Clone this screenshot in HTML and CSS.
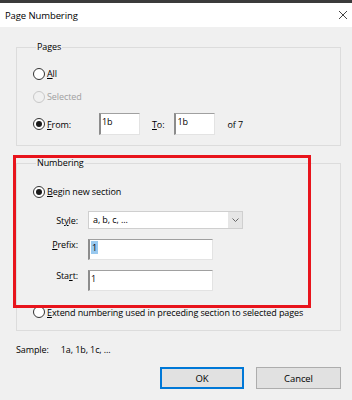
FILE: index.html
```html
<!DOCTYPE html>
<html lang="en">
<head>
    <meta charset="UTF-8">
    <title>Page Numbering</title>
    <link rel="stylesheet" href="styles.css">
</head>
<body>

<div class="dialog">
    <div class="topbar"></div>
    <div class="titlebar">
        <span class="title">Page Numbering</span>
        <svg class="close" width="10" height="10" viewBox="0 0 10 10">
            <path d="M1 1 L9 9 M9 1 L1 9" stroke="#444" stroke-width="1" fill="none"/>
        </svg>
    </div>

    <div class="content">
        <fieldset class="group pages">
            <legend>Pages</legend>
            <div class="row first">
                <span class="radio"></span><span><u>A</u>ll</span>
            </div>
            <div class="row disabled">
                <span class="radio"></span><span>Selected</span>
            </div>
            <div class="row range">
                <span class="radio checked"></span><span class="from-label"><u>F</u>rom:</span>
                <span class="field small">1b</span>
                <span class="to-label"><u>T</u>o:</span>
                <span class="field small">1b</span>
                <span class="total">of 7</span>
            </div>
        </fieldset>

        <fieldset class="group numbering">
            <legend>Numbering</legend>
            <div class="row first">
                <span class="radio checked"></span><span><u>B</u>egin new section</span>
            </div>
            <div class="form-row style-row">
                <span class="label">St<u>y</u>le:</span>
                <span class="select"><span class="select-text">a, b, c, ...</span><span class="select-arrow">
                    <svg width="7" height="4" viewBox="0 0 7 4"><path d="M0.5 0.5 L3.5 3.5 L6.5 0.5" stroke="#666" fill="none"/></svg>
                </span></span>
            </div>
            <div class="form-row">
                <span class="label"><u>P</u>refix:</span>
                <span class="field wide"><span class="selected">1</span></span>
            </div>
            <div class="form-row">
                <span class="label">Sta<u>r</u>t:</span>
                <span class="field wide">1</span>
            </div>
            <div class="row extend">
                <span class="radio"></span><span><u>E</u>xtend numbering used in preceding section to selected pages</span>
            </div>
        </fieldset>

        <div class="sample">
            <span>Sample:</span>
            <span class="sample-value">1a, 1b, 1c, ...</span>
        </div>

        <div class="buttons">
            <button class="btn default">OK</button>
            <button class="btn">Cancel</button>
        </div>

        <!-- annotation drawn over the dialog -->
        <div class="highlight"></div>
    </div>
</div>

</body>
</html>
```

FILE: styles.css
```css
body {
    margin: 0;
    background-color: #f0f0f0;
    font-family: "Open Sans", "Noto Sans", sans-serif;
    font-size: 9px;
    letter-spacing: -0.1px;
    color: #000;
}
u {
    text-decoration-thickness: 1px;
    text-underline-offset: 1px;
}
.dialog {
    width: 352px;
    height: 400px;
    background-color: #f0f0f0;
}
.topbar {
    height: 3px;
    background-color: #3b3b3b;
}
.titlebar {
    height: 24px;
    background-color: #fff;
    display: flex;
    align-items: center;
    justify-content: space-between;
    padding: 0 3px 0 5px;
}
.title {
    font-size: 9.5px;
}
.close {
    margin-right: 1px;
}

.content {
    position: relative;
    padding: 13px 11px 0 16px;
}
.group {
    margin: 0;
    border: 1px solid #dcdcdc;
    padding: 0 0 0 16px;
}
.group legend {
    padding: 0 1px;
    margin-left: 3px;
    line-height: 14px;
}
.pages {
    padding-top: 8px;
    padding-bottom: 10px;
}
.numbering {
    margin-top: 10px;
    padding-top: 10px;
    padding-bottom: 8px;
}

.row {
    display: flex;
    align-items: center;
    height: 23px;
}
.row.disabled {
    color: #a0a0a0;
}
.row.range {
    height: 22px;
    margin-top: 5px;
}
.radio {
    width: 10px;
    height: 10px;
    border: 1px solid #333;
    border-radius: 50%;
    background-color: #fff;
    margin-right: 2px;
    position: relative;
    flex-shrink: 0;
}
.row.disabled .radio {
    border-color: #c8c8c8;
    background-color: #f0f0f0;
}
.radio.checked::after {
    content: "";
    position: absolute;
    left: 2px;
    top: 2px;
    width: 6px;
    height: 6px;
    border-radius: 50%;
    background-color: #1a1a1a;
}
.from-label {
    width: 52px;
}
.field {
    box-sizing: border-box;
    height: 22px;
    background-color: #fff;
    border-top: 1px solid #a0a0a0;
    border-left: 2px solid #8c8c8c;
    border-right: 1px solid #e3e3e3;
    border-bottom: 1px solid #e3e3e3;
    padding: 1px 0 0 1px;
    line-height: 14px;
    align-self: flex-start;
}
.field.small {
    width: 41px;
}
.to-label {
    margin: 0 10px 0 12px;
}
.total {
    margin-left: 12px;
}

.form-row {
    display: flex;
    align-items: center;
}
.form-row .label {
    width: 61px;
    text-align: right;
    margin-right: 10px;
    margin-left: -16px;
}
.style-row {
    margin-top: 8px;
}
.select {
    display: flex;
    box-sizing: border-box;
    width: 155px;
    height: 18px;
    border: 1px solid #cfcfcf;
    background-color: #fff;
}
.select-text {
    flex: 1;
    padding-left: 4px;
    line-height: 16px;
}
.select-arrow {
    width: 14px;
    display: flex;
    align-items: center;
    justify-content: center;
    background-color: #e6e6e6;
}
.field.wide {
    width: 125px;
    height: 21px;
    margin-top: 13px;
}
.form-row + .form-row .field.wide {
    margin-top: 10px;
}
.selected {
    background-color: #99c9ef;
    padding: 0 1px;
}
.row.extend {
    margin-top: 11px;
    height: 20px;
}

.sample {
    display: flex;
    margin-top: 12px;
    line-height: 14px;
}
.sample-value {
    margin-left: 12px;
}
.buttons {
    display: flex;
    justify-content: flex-end;
    gap: 12px;
    margin-top: 10px;
}
.btn {
    box-sizing: border-box;
    width: 85px;
    height: 22px;
    font-family: inherit;
    font-size: 9.5px;
    letter-spacing: -0.1px;
    background-color: #e1e1e1;
    border: 1px solid #adadad;
    padding: 0;
    color: #000;
}
.btn.default {
    border: 2px solid #0078d7;
    width: 84px;
}

.highlight {
    position: absolute;
    left: 13px;
    top: 128px;
    width: 292px;
    height: 147px;
    border: 3px solid #e8141c;
}
```
